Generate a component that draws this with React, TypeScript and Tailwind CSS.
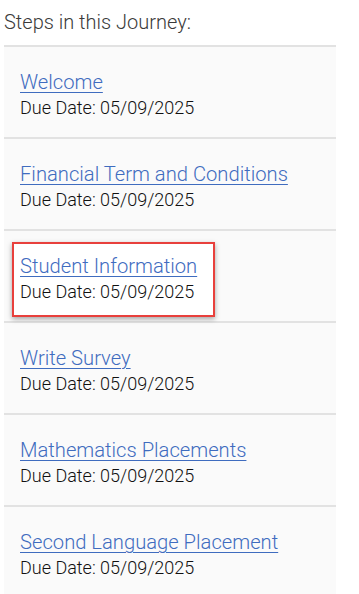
const STEPS = [
  { title: "Welcome", due: "05/09/2025" },
  { title: "Financial Term and Conditions", due: "05/09/2025" },
  { title: "Student Information", due: "05/09/2025", highlight: true },
  { title: "Write Survey", due: "05/09/2025" },
  { title: "Mathematics Placements", due: "05/09/2025" },
  { title: "Second Language Placement", due: "05/09/2025" },
];

export default function App() {
  return (
    <div className="min-h-[594px] bg-white font-['Roboto',sans-serif]">
      <div className="w-[332px] ml-1">
        <h2 className="h-[45px] pt-[8px] text-[20px] leading-[28px] font-light text-[#3a3a3a]">
          Steps in this Journey:
        </h2>
        <ul>
          {STEPS.map((s) => (
            <li key={s.title} className="h-[92px] border-t-2 border-[#e2e2e2] bg-[#fafafa]">
              <div
                className={`inline-flex flex-col mt-[11px] ml-2 border-2 pt-[9px] pb-[10px] pl-[6px] pr-4 ${
                  s.highlight
                    ? "border-[#e8403c] bg-white shadow-[0_2px_5px_rgba(0,0,0,0.35)]"
                    : "border-transparent"
                }`}
              >
                <a href="#" className="text-[20.2px] leading-[26px] font-light text-[#3f6cbf] underline underline-offset-[3px] decoration-1">
                  {s.title}
                </a>
                <span className="text-[18px] leading-[26px] font-light text-[#111]">Due Date: {s.due}</span>
              </div>
            </li>
          ))}
        </ul>
      </div>
    </div>
  );
}
